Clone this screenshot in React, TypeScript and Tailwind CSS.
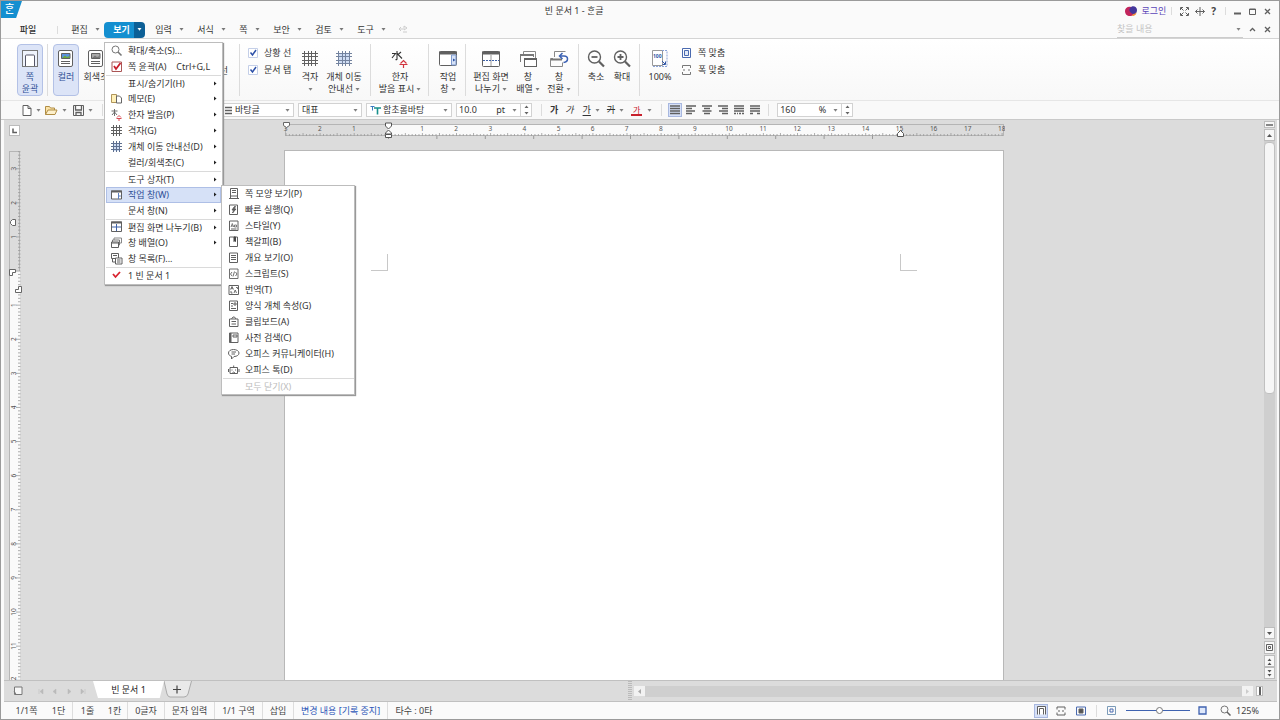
import React from "react";

type SvgProps = { w: number; h?: number; children: React.ReactNode; className?: string };

function Svg({ w, h = w, children, className = "" }: SvgProps) {
  return (
    <svg
      width={w}
      height={h}
      viewBox={`0 0 ${w} ${h}`}
      fill="none"
      stroke="#606060"
      strokeWidth="1"
      className={`shrink-0 ${className}`}
      aria-hidden="true"
    >
      {children}
    </svg>
  );
}

const Caret = ({ color = "#808080" }: { color?: string }) => (
  <Svg w={5} h={3}>
    <path d="M0.5 0h4L2.500 2.800z" fill={color} stroke="none" />
  </Svg>
);

const Divider = ({ className = "h-4" }: { className?: string }) => (
  <span className={`w-px shrink-0 bg-[#dcdcdc] ${className}`} />
);

/* ---------- title and menu bars ---------- */

function TitleBar() {
  return (
    <header className="flex h-5 shrink-0 items-center">
      <div className="flex w-28 shrink-0 self-start">
        <div className="h-[17px] w-[21px] bg-[#148fd0] text-center [clip-path:polygon(0_0,100%_0,72%_100%,0_100%)]">
          <span className="block pr-1 text-[11px] leading-4 font-medium text-white">ᄒᆞᆫ</span>
        </div>
      </div>
      <h1 className="flex-1 pr-[90px] text-center text-[9px] text-[#333]">빈 문서 1 - ᄒᆞᆫ글</h1>
      <div className="flex shrink-0 items-center pr-1">
        <button className="flex items-center gap-1 text-[9px] text-[#5a45b8]">
          <Svg w={12} h={10}>
            <path d="M6 1C3 0 0 2 0 5s2 5 5 5c3 0 4-2 4-5S8 1 6 1z" fill="#c2255c" stroke="none" />
            <path d="M5 2c2-3 7-2 7 2 0 3-2 5-4 4S3 5 5 2z" fill="#43369b" stroke="none" />
            <path d="M8 8c2 0 3-1 3-2 1 2-1 4-4 4z" fill="#f08c3a" stroke="none" />
          </Svg>
          로그인
        </button>
        <Divider className="mr-2 ml-[5px] h-2" />
        <button aria-label="전체 화면" className="mr-[6px]">
          <Svg w={9}>
            <path d="M0.5 3V0.5H3M6 0.5h2.5V3M8.5 6v2.5H6M3 8.5H0.5V6M1 1l2.5 2.5M8 1L5.500 3.500M8 8L5.500 5.500M1 8l2.500-2.500" />
          </Svg>
        </button>
        <button aria-label="창 맞춤" className="mr-[6px]">
          <Svg w={10} h={9}>
            <path d="M5 0v9M0.500 4.500h9M2.500 2.500l-2 2 2 2M7.500 2.500l2 2-2 2" />
          </Svg>
        </button>
        <button className="text-[10px] font-bold text-[#444]">?</button>
        <Divider className="mr-2 ml-[9px] h-2" />
        <button aria-label="최소화" className="mr-2">
          <Svg w={7}><path d="M0 5.500h7" strokeWidth="2" /></Svg>
        </button>
        <button aria-label="최대화" className="mr-2">
          <Svg w={7}><path d="M0.500 1h6v5.500h-6zM0 1.500h7" /></Svg>
        </button>
        <button aria-label="닫기" className="mr-1">
          <Svg w={7}><path d="M1 1l5 5M6 1L1 6" strokeWidth="1.300" /></Svg>
        </button>
      </div>
    </header>
  );
}

type Item = {
  label: string;
  icon?: React.ReactNode;
  shortcut?: string;
  arrow?: boolean;
  sep?: boolean;
  active?: boolean;
  disabled?: boolean;
};

const subItems: Item[] = [
  { label: "쪽 모양 보기(P)", icon: <path d="M2.500 0.500h7v7.500h-7zM4 2.500h4M4 4.500h4M1 10.500h10M2.500 8v2.500M9.500 8v2.500" /> },
  { label: "빠른 실행(Q)", icon: <><path d="M1.500 1h8v9.500h-8z" /><path d="M6.500 2.500L4 6h2l-1.500 3L8 5H6l1.500-2.500z" fill="#555" /></> },
  { label: "스타일(Y)", icon: <><path d="M1.500 1h8.500v9.500H1.500zM3 9h5.500" /><path d="M3 7l1.300-3.500L5.600 7M3.500 6h1.700M8.500 7V5H6.500v2z" strokeWidth="0.800" /></> },
  { label: "책갈피(B)", icon: <><path d="M1.500 1h8v9.500h-8z" /><path d="M6 1h1.500v4.500l-.75-.75-.75.750z" fill="#444" stroke="#444" /></> },
  { label: "개요 보기(O)", icon: <path d="M1.500 1h8v9.500h-8zM3 3.500h5M3 5.500h5M3 7.500h5" /> },
  { label: "스크립트(S)", icon: <path d="M1.500 1h8.500v9.500H1.500zM4 4L2.500 6 4 8M7.500 4L9 6 7.500 8M6.500 3.500l-1.500 5" strokeWidth="0.900" /> },
  { label: "번역(T)", icon: <><path d="M1 1.500h9.500v9H1z" /><path d="M2.500 5.500L4 2.500l1.500 3M3 4.700h2M6 9l1.200-3L8.500 9M3 7v2h1.500M8 3.500h1.500V5" strokeWidth="0.900" /></> },
  { label: "양식 개체 속성(G)", icon: <path d="M1.500 1h8v9.500h-8zM3 3.500h2M6 3h2v2H6zM3 6h2M3 8.500h5" /> },
  { label: "클립보드(A)", icon: <path d="M1.500 3h8.500v7.500H1.500zM3.500 3L5 1h1.500L8 3M3.500 5.500h4.500M3.500 8h4.500" /> },
  { label: "사전 검색(C)", icon: <><path d="M1.500 1h8.500v9.500H1.500zM5 3h4v2H5z" /><path d="M2.500 1v9.500" strokeWidth="2" /></> },
  { label: "오피스 커뮤니케이터(H)", icon: <path d="M5.500 1.500c-3 0-5 1.500-5 3.500s1.500 3 3 3.300V11L6 8.500c3 0 5-1.500 5-3.500s-2.500-3.500-5.500-3.500zM3.500 4h4.500M3.500 6H7" /> },
  { label: "오피스 톡(D)", icon: <><path d="M2 3.500h7.500v6H2zM0.500 5v3M11 5v3M5.700 1.500v2" /><path d="M4 5.500v1M7.500 5.500v1M4 9.500l1.700-1.500 1.800 1.500" /></> },
  { label: "모두 닫기(X)", sep: true, disabled: true },
];

const winIcon = (
  <>
    <path d="M0.500 2h10v8H0.500z" fill="#fff" />
    <path d="M0 2.500h11" strokeWidth="2" />
    <path d="M7.500 4v6" stroke="#5b7fc0" />
    <path d="M8.500 6l1.500 1-1.500 1z" fill="#355fb0" stroke="none" />
  </>
);

const viewItems: Item[] = [
  { label: "확대/축소(S)...", icon: <><circle cx="4.500" cy="4.500" r="3.500" stroke="#777" /><path d="M7 7l3.500 3.500" stroke="#777" strokeWidth="1.600" /></> },
  { label: "쪽 윤곽(A)", shortcut: "Ctrl+G,L", icon: <><path d="M1 1h9.500v9.500H1z" stroke="#a55" /><path d="M3 5l2 3 4.500-6" stroke="#c81e2b" strokeWidth="1.800" /></> },
  { label: "표시/숨기기(H)", arrow: true, sep: true },
  { label: "메모(E)", arrow: true, icon: <><path d="M0.500 1.500h5v8h-5z" fill="#fff0b8" stroke="#b0955a" /><path d="M5.500 3h3l2 2v5h-5z" fill="#fff" stroke="#666" /></> },
  { label: "한자 발음(P)", arrow: true, icon: <><path d="M3.500 0v7M0.500 2h6M3.500 3L1 6M3.500 3L6 6" strokeWidth="0.900" /><path d="M6 8.500L8 6.500l2 2M5.500 9.500h5M8 9.500V12" stroke="#d2353f" strokeWidth="0.900" /></> },
  { label: "격자(G)", arrow: true, icon: <path d="M0 2.500h11M0 5.500h11M0 8.500h11M2.500 0v11M5.500 0v11M8.500 0v11" /> },
  { label: "개체 이동 안내선(D)", arrow: true, icon: <><path d="M3 2h6v8H3z" fill="#cddcf3" stroke="none" /><path d="M0 2.500h11M0 5.500h11M0 8.500h11M2.500 0v11M5.500 0v11M8.500 0v11" stroke="#5f7090" /></> },
  { label: "컬러/회색조(C)", arrow: true },
  { label: "도구 상자(T)", arrow: true, sep: true },
  { label: "작업 창(W)", arrow: true, active: true, icon: winIcon },
  { label: "문서 창(N)", arrow: true },
  { label: "편집 화면 나누기(B)", arrow: true, sep: true, icon: <><path d="M0.500 1h10v9.500H0.500z" /><path d="M0 1.500h11" strokeWidth="2" /><path d="M5.500 3v7M1 6h9" stroke="#3f62a8" /></> },
  { label: "창 배열(O)", arrow: true, icon: <><path d="M3 3V1h7.500v5H9" stroke="#888" /><path d="M1.500 5V3H8.500v5H8" stroke="#777" /><path d="M0.500 5h7v5.500h-7zM0.500 6h7" fill="#fff" /></> },
  { label: "창 목록(F)...", icon: <><path d="M0.500 0.500h7v5h-7zM2 2.500h4M1.500 6v3H4" /><path d="M4.500 5h6.500v6H4.500zM6 7h3.500M6 9h3.500" fill="#fff" /></> },
  { label: "1 빈 문서 1", sep: true, icon: <path d="M2 5l2.500 3L9 3" stroke="#d8232f" strokeWidth="1.800" /> },
];

function MenuList({ items, pad, submenu }: { items: Item[]; pad: string; submenu?: React.ReactNode }) {
  return (
    <ul className={`border border-[#bdbdbd] bg-white shadow-[1px_1px_1px_#999] ${pad}`}>
      {items.map((it) => (
        <li key={it.label} className={`relative h-4 ${it.sep ? "border-t border-[#dadada]" : ""}`}>
          <button
            disabled={it.disabled}
            className={`flex h-full w-full items-center pr-1 pl-1 text-left text-[9px] leading-none whitespace-nowrap ${
              it.active ? "bg-[#d6e1f7] text-[#2f4f96] outline outline-[#aebfe6] -outline-offset-1" : it.disabled ? "text-[#bbb]" : "text-[#333]"
            }`}
          >
            <span className="flex w-[18px] shrink-0 pl-px">{it.icon && <Svg w={12}>{it.icon}</Svg>}</span>
            <span className="flex-1">
              {it.label}
              {it.shortcut && <span className="pl-[10px]">{it.shortcut}</span>}
            </span>
            {it.arrow && (
              <Svg w={3} h={5}>
                <path d="M0 0.500v4L2.500 2.500z" fill="#222" stroke="none" />
              </Svg>
            )}
          </button>
          {it.active && submenu}
        </li>
      ))}
    </ul>
  );
}

function ViewMenu() {
  return (
    <div className="absolute top-full left-0 z-20 w-[119px] pt-[4px]">
      <MenuList
        items={viewItems}
        pad="px-[1px] pb-px"
        submenu={
          <div className="absolute -top-[2px] left-full z-30 w-[134px]">
            <MenuList items={subItems} pad="pl-[1px]" />
          </div>
        }
      />
    </div>
  );
}

const menus = ["편집", "보기", "입력", "서식", "쪽", "보안", "검토", "도구"];

function MenuBar() {
  return (
    <nav className="flex h-[18px] shrink-0 items-center border-b border-[#d4d4d4] pl-[18px] text-[9px]">
      <button className="w-[18px] font-medium whitespace-nowrap">파일</button>
      <Divider className="ml-5 h-2" />
      <div className="flex flex-1 items-center pl-1">
        {menus.map((m) => {
          const on = m === "보기";
          return (
            <div key={m} className="relative mr-[1px] flex h-4 items-center">
              <button
                className={`h-4 pl-[5px] whitespace-nowrap ${m === "쪽" ? "w-[22px]" : "w-[30px]"} ${
                  on ? "rounded-l-sm bg-[#148fd0] font-bold text-white" : ""
                }`}
              >
                {m}
              </button>
              <button
                aria-label={`${m} 메뉴`}
                className={`flex h-4 w-[11px] items-center justify-center ${on ? "rounded-r-sm bg-[#0c5f96]" : ""}`}
              >
                <Caret color={on ? "#fff" : "#777"} />
              </button>
              {on && <ViewMenu />}
            </div>
          );
        })}
        <Svg w={10} h={9} className="ml-2">
          <path d="M1 4h4M3 2l-2 2 2 2M6 1l3 2-3 2zM5 7h4" stroke="#ccc" />
        </Svg>
      </div>
      <label className="flex w-[126px] items-center border-b border-[#ccc] pr-[2px]">
        <input aria-label="찾을 내용" placeholder="찾을 내용" className="w-0 flex-1 leading-4 outline-none placeholder:text-[#c4c4c4]" />
        <Caret />
      </label>
      <div className="flex items-center gap-2 pr-2 pl-[6px]">
        <button aria-label="접기"><Svg w={7}><path d="M1 5l2.500-2.500L6 5" strokeWidth="1.300" /></Svg></button>
        <button aria-label="문서 닫기"><Svg w={7}><path d="M1 1l5 5M6 1L1 6" strokeWidth="1.300" /></Svg></button>
      </div>
    </nav>
  );
}

/* ---------- ribbon ---------- */

function Big({ icon, lines, w, on, caret, below }: { icon: React.ReactNode; lines: string[]; w: string; on?: boolean; caret?: boolean; below?: boolean }) {
  return (
    <button
      className={`flex h-[52px] shrink-0 flex-col items-center rounded-sm border pt-[4px] text-[9px] leading-3 whitespace-nowrap ${w} ${
        on ? "border-[#b3c1e6] bg-[#dce4f7] text-[#2f4f96]" : "border-transparent text-[#333]"
      }`}
    >
      <Svg w={20} className="mb-[2px]">{icon}</Svg>
      {lines.map((l, i) => (
        <span key={l} className="flex items-center gap-[2px]">
          {l}
          {caret && i === lines.length - 1 && <Caret />}
        </span>
      ))}
      {below && <span className="flex h-3 items-center"><Caret /></span>}
    </button>
  );
}

const Tick = ({ label }: { label: string }) => (
  <label className="flex h-[17px] items-center gap-[6px] whitespace-nowrap">
    <input type="checkbox" defaultChecked className="peer sr-only" />
    <Svg w={10}>
      <path d="M0.500 0.500h9v9h-9z" fill="#fff" stroke="#c4cfe8" />
      <path d="M2.500 4.500l2 2.500 3.500-5" stroke="#2c50a8" strokeWidth="1.500" />
    </Svg>
    {label}
  </label>
);

const picture = (sky: string, land: string) => (
  <>
    <rect x="2.500" y="1.500" width="14" height="16" rx="1.500" fill="#fff" />
    <path d="M5.500 4.500h8.500v5H5.500z" fill={sky} />
    <path d="M6 9l3-2.500 2 1.500 2.500-1v2z" fill={land} stroke="none" />
    <path d="M5 12.500h9M5 14.500h9" />
  </>
);

const gridLines = "M4.500 2v15M8.500 2v15M11.500 2v15M15.500 2v15M2 4.500h16M2 7.500h16M2 11.500h16M2 14.500h16";

const RSep = ({ className = "" }: { className?: string }) => <Divider className={`h-[52px] ${className}`} />;

function Ribbon() {
  return (
    <section className="flex h-[62px] shrink-0 items-start overflow-hidden border-b border-[#e6e6e6] bg-linear-to-b from-white to-[#f8f8f8] pt-[5px] pl-4 text-[9px]">
      <Big w="w-[26px]" on lines={["쪽", "윤곽"]} icon={<><rect x="2.500" y="1.500" width="15" height="16" stroke="#777" fill="#eef2fb" /><path d="M5.500 17V7q0-1 1-1h7q1 0 1 1v10" fill="#fff" stroke="#556" /></>} />
      <RSep className="mr-[5px] ml-[4px]" />
      <Big w="w-[26px]" on lines={["컬러"]} icon={picture("#5b93dd", "#6faa3e")} />
      <Big w="w-[34px]" lines={["회색조"]} icon={picture("#aaa", "#777")} />
      <div className="flex w-[115px] shrink-0 flex-col items-end overflow-hidden pt-[1px]">
        <span className="h-[17px]" />
        <span className="h-[17px] leading-[17px]">선</span>
      </div>
      <RSep className="mr-[8px] ml-[11px]" />
      <div className="flex w-[47px] shrink-0 flex-col">
        <Tick label="상황 선" />
        <Tick label="문서 탭" />
      </div>
      <Big w="w-[30px]" lines={["격자"]} below icon={<path d={gridLines} />} />
      <Big w="w-[38px]" lines={["개체 이동", "안내선"]} caret icon={<><path d="M5 5h10v10H5z" fill="#cfddf4" stroke="none" /><path d={gridLines} stroke="#73839f" /></>} />
      <RSep className="mr-[7px] ml-[7px]" />
      <Big w="w-[44px]" lines={["한자", "발음 표시"]} caret icon={<><path d="M7 2v8q0 1-1.500 0.500M2 4.500h3.500L2 9M11 3L8 5.500 12 9.500M7 4l1.500 2" stroke="#333" strokeWidth="1.100" /><path d="M10.500 14.500L13.500 11.500l3 3M9.500 15.500h8M13.500 15.500V19" stroke="#d2353f" strokeWidth="1.200" /></>} />
      <RSep className="mr-[6px] ml-[6px]" />
      <Big w="w-[26px]" lines={["작업", "창"]} caret icon={<><rect x="1.500" y="2.500" width="17" height="14" rx="1" fill="#fff" /><path d="M1 4h18" strokeWidth="3" /><path d="M13.500 6h4.500v10h-4.500z" fill="#d6e2f7" stroke="#7f9bd0" /><path d="M15 9.500l2.500 1.500-2.500 1.500z" fill="#2f55a5" stroke="none" /></>} />
      <RSep className="mr-[5px] ml-[4px]" />
      <Big w="w-[40px]" lines={["편집 화면", "나누기"]} caret icon={<><rect x="1.500" y="2.500" width="17" height="15" rx="1" fill="#fff" /><path d="M1 4h18" strokeWidth="3" /><path d="M10 6v11" stroke="#999" /><path d="M2 11.500h16" stroke="#3f62a8" strokeDasharray="2 1" /></>} />
      <Big w="w-[34px]" lines={["창", "배열"]} caret icon={<><path d="M5.500 5V2.500h12v8H16" stroke="#888" /><path d="M2.500 13V5.500h13V8" stroke="#777" /><path d="M2 6h14" strokeWidth="2" stroke="#777" /><rect x="6.500" y="9.500" width="12" height="8" fill="#fff" /><path d="M6 10h13" strokeWidth="2" /></>} />
      <Big w="w-[28px]" lines={["창", "전환"]} caret icon={<><path d="M5.500 8V2.500h11M4 9.500H1.500v8h12v-4" stroke="#888" /><path d="M2 10.500h11" strokeWidth="2" stroke="#777" /><path d="M11 7h4q3.500 0 3.500 3t-4 3.500M13.500 4L10.500 7l3 3" stroke="#3c62b4" strokeWidth="1.500" /></>} />
      <RSep className="mr-[4px] ml-[5px]" />
      <Big w="w-[26px]" lines={["축소"]} icon={<><circle cx="8.500" cy="8" r="6" strokeWidth="1.400" /><path d="M13 12.500l5 5" strokeWidth="2.200" /><path d="M5.500 8h6" strokeWidth="1.800" /></>} />
      <Big w="w-[26px]" lines={["확대"]} icon={<><circle cx="8.500" cy="8" r="6" strokeWidth="1.400" /><path d="M13 12.500l5 5" strokeWidth="2.200" /><path d="M5.500 8h6M8.500 5v6" strokeWidth="1.800" /></>} />
      <RSep className="mr-[6px] ml-[4px]" />
      <Big
        w="w-[28px]"
        lines={["100%"]}
        icon={
          <>
            <path d="M2.500 1.500h10v15h-10z" fill="#fff" stroke="#999" />
            <path d="M12 1.500h5v16H3" stroke="#8aa3d8" strokeDasharray="2 1" />
            <text x="3" y="9" fontSize="5" fontWeight="700" fill="#2f55a5" stroke="none">100</text>
            <path d="M12 12l3 3M15.500 12.500v3h-3" stroke="#2f55a5" />
          </>
        }
      />
      <div className="flex flex-col pl-[8px]">
        <button className="flex h-[17px] items-center gap-[6px]">
          <Svg w={10}><path d="M0.500 0.500h8v9h-8z" stroke="#4b6bb0" /><path d="M2.500 2.500h4v5H2.500z" stroke="#4b6bb0" fill="#e3ebfa" /></Svg>
          쪽 맞춤
        </button>
        <button className="flex h-[17px] items-center gap-[6px]">
          <Svg w={10}><path d="M0.500 3V0.500h8V3M0.500 7v2.500h8V7M1 5h2M6 5h2" stroke="#777" /></Svg>
          폭 맞춤
        </button>
      </div>
    </section>
  );
}

/* ---------- formatting toolbar ---------- */

function Combo({ label, value, w, icon }: { label: string; value: string; w: string; icon?: React.ReactNode }) {
  return (
    <label className={`flex h-[14px] shrink-0 items-center border border-[#d2d2d2] bg-white pr-[3px] pl-[3px] ${w}`}>
      {icon}
      <select aria-label={label} className="w-0 flex-1 appearance-none bg-transparent leading-3 outline-none">
        <option>{value}</option>
      </select>
      <Caret />
    </label>
  );
}

function NumberBox({ label, value, unit }: { label: string; value: string; unit: string }) {
  return (
    <div className="flex h-[14px] shrink-0 border border-[#d2d2d2] bg-white">
      <label className="flex w-[63px] items-center pr-[3px] pl-[2px]">
        <input aria-label={label} defaultValue={value} className="w-0 flex-1 leading-3 outline-none" />
        <span className="pr-[7px]">{unit}</span>
        <Caret />
      </label>
      <button aria-label={`${label} 조절`} className="flex w-[11px] items-center justify-center border-l border-[#d2d2d2]">
        <Svg w={5} h={10}>
          <path d="M0.500 3h4L2.500 0.500zM0.500 7h4L2.500 9.500z" fill="#666" stroke="none" />
        </Svg>
      </button>
    </div>
  );
}

const aligns = [
  { n: "양쪽 정렬", d: "M0 1h10M0 3.500h10M0 6h10M0 8.500h10" },
  { n: "왼쪽 정렬", d: "M0 1h10M0 3.500h6M0 6h9M0 8.500h6" },
  { n: "가운데 정렬", d: "M0 1h10M2 3.500h6M0.500 6h9M2 8.500h6" },
  { n: "오른쪽 정렬", d: "M0 1h10M4 3.500h6M1 6h9M4 8.500h6" },
  { n: "배분 정렬", d: "M0 1h10M0 3.500h10M0 6h10M0 8.500h2M3 8.500h1M5 8.500h2M8 8.500h2" },
  { n: "나눔 정렬", d: "M0 1h10M0 3.500h10M0 6h10M0 8.500h3M7 8.500h3" },
];

function Toolbar() {
  return (
    <section className="flex h-[19px] shrink-0 items-center border-b border-[#c9c9c9] bg-[#f9f9f9] pl-[21px] text-[9px] text-[#333]">
      <button aria-label="새 문서" className="mr-1 flex items-center gap-[4px]">
        <Svg w={10} h={11}><path d="M1 0.500h5l3 3v7H1zM6 0.500v3h3" fill="#fff" /></Svg>
        <Caret />
      </button>
      <button aria-label="불러오기" className="mr-[6px] flex items-center gap-[4px]">
        <Svg w={13} h={11}><path d="M0.500 9.500v-8h4l1 1.500h4V5" fill="#fbe3a8" stroke="#b08d45" /><path d="M0.500 9.500L3 5h9L10 9.500z" fill="#fdf0cc" stroke="#b08d45" /></Svg>
        <Caret />
      </button>
      <button aria-label="저장하기" className="flex items-center gap-[4px]">
        <Svg w={11}><path d="M0.500 0.500h10v10h-10z" /><path d="M2 5h7M2.500 1v3.500M8.500 1v3.500M3 10V7.500h5V10" strokeWidth="1.300" /></Svg>
        <Caret />
      </button>
      <Divider className="mr-[117px] ml-[9px] h-3" />
      <div className="flex gap-1">
        <Combo label="스타일" value="바탕글" w="w-[74px]" icon={<Svg w={9} className="mr-[2px]"><path d="M1 1.500h7M1 4.500h7M1 7.500h7" strokeWidth="1.500" /></Svg>} />
        <Combo label="언어" value="대표" w="w-[64px]" />
        <Combo
          label="글꼴"
          value="함초롬바탕"
          w="w-[86px]"
          icon={<Svg w={12} h={10} className="mr-px"><path d="M4 3h7M7.500 3V9.500" stroke="#17908c" strokeWidth="1.600" /><path d="M0.500 1.500h4M2.500 1.500v4" stroke="#3a7ac0" /></Svg>}
        />
        <NumberBox label="글자 크기" value="10.0" unit="pt" />
      </div>
      <Divider className="mr-2 ml-[9px] h-3" />
      <button className="mr-[7px] font-bold">가</button>
      <button className="mr-[9px] italic">가</button>
      <button className="flex items-center gap-[4px]"><span className="underline underline-offset-2">가</span><Caret /></button>
      <button className="ml-[7px] flex items-center gap-[4px]"><span className="line-through">가</span><Caret /></button>
      <button className="ml-[7px] flex items-center gap-[5px]">
        <span className="flex w-[11px] flex-col items-center text-[8px] leading-[9px] text-[#c8202c]">
          가
          <span className="h-[2px] w-full bg-[#c8202c]" />
        </span>
        <Caret />
      </button>
      <Divider className="mr-[6px] ml-[9px] h-3" />
      <div className="flex gap-[2px]">
        {aligns.map((a, i) => (
          <button
            key={a.n}
            aria-label={a.n}
            className={`flex h-[14px] w-[14px] items-center justify-center border ${i === 0 ? "border-[#a8b8e0] bg-[#d6e0f7]" : "border-transparent"}`}
          >
            <Svg w={10}><path d={a.d} strokeWidth="1.500" /></Svg>
          </button>
        ))}
      </div>
      <Divider className="mr-[8px] ml-[6px] h-3" />
      <NumberBox label="줄 간격" value="160" unit="%" />
    </section>
  );
}

/* ---------- rulers and work area ---------- */

const CM = 34.1;

function HRuler() {
  const ticks = Array.from({ length: 211 }, (_, i) => i);
  return (
    <svg width="722" height="18" viewBox="0 0 722 18" className="mx-auto block" aria-hidden="true">
      <rect x="2.500" y="2.500" width="718" height="11" fill="#dcdcdc" stroke="#b5b5b5" />
      <rect x="105" y="3" width="512" height="10" fill="#fafafa" />
      {ticks.map((i) => (
        <path key={i} d={`M${3 + i * 3.41} ${i % 5 ? 12 : 11}V14`} stroke="#999" strokeWidth="0.800" />
      ))}
      {Array.from({ length: 22 }, (_, i) => i - 3).map((n) =>
        n === 0 ? null : (
          <text key={n} x={105 + n * CM} y="9" fontSize="6.500" textAnchor="middle" fill="#555">
            {Math.abs(n)}
          </text>
        ),
      )}
      {Array.from({ length: 11 }, (_, i) => (
        <path key={i} d={`M${105.500 + i * 48.400} 14v3`} stroke="#999" />
      ))}
      <path d="M0.500 0.500h6v3L3.500 5.500l-3-2z" fill="#fff" stroke="#666" />
      <path d="M102.500 1h6v3l-3 3-3-3zM105.500 8l3 3v1h-6v-1zM102.500 12.500h6v3h-6z" fill="#fff" stroke="#555" />
      <path d="M617.500 8.500l3 3v3h-6v-3z" fill="#fff" stroke="#555" />
    </svg>
  );
}

function VRuler() {
  return (
    <div className="flex w-[19px] shrink-0 flex-col items-start overflow-hidden pt-[5px] pl-[5px]">
      <button aria-label="탭 종류" className="mb-[15px] border border-[#bbb] bg-white">
        <Svg w={9}><path d="M3 2.500v4h4" strokeWidth="1.500" /></Svg>
      </button>
      <svg width="15" height="531" viewBox="0 0 15 531" className="block shrink-0" aria-hidden="true">
        <rect x="0.500" y="0.500" width="10" height="540" fill="#dcdcdc" stroke="#b5b5b5" />
        <rect x="1" y="120" width="10" height="411" fill="#fafafa" />
        {Array.from({ length: 156 }, (_, i) => (
          <path key={i} d={`M${(i - 5) % 10 ? 9 : 7} ${0.700 + i * 3.410}H11.500`} stroke="#999" strokeWidth="0.800" />
        ))}
        {Array.from({ length: 16 }, (_, i) => i - 3).map((n) =>
          n === 0 ? null : (
            <text key={n} transform={`translate(6.500 ${120 + n * CM}) rotate(-90)`} fontSize="6.500" textAnchor="middle" fill="#555">
              {Math.abs(n)}
            </text>
          ),
        )}
        <path d="M6.500 68.500v6h-3L1.500 72.500v-2l2-2z" fill="#fff" stroke="#666" />
        <path d="M0.500 118.500h6v3h-3v3H0.500z" fill="#fff" stroke="#666" />
        <path d="M9.500 135.500h3v6H6.500v-3h3z" fill="#fff" stroke="#666" />
      </svg>
    </div>
  );
}

const sbtn = "flex w-[11px] shrink-0 items-center justify-center border border-[#bdbdbd] bg-[#f7f7f7]";

function VScroll() {
  return (
    <div className="mr-px flex w-[12px] shrink-0 flex-col pt-px pb-px">
      <button aria-label="화면 나누기" className={`${sbtn} h-[7px]`}><Svg w={7} h={2}><path d="M0 1h7" strokeWidth="1.500" /></Svg></button>
      <button aria-label="위로" className={`${sbtn} mt-px h-[12px]`}><Svg w={5} h={3}><path d="M0 3h5L2.500 0z" fill="#555" stroke="none" /></Svg></button>
      <div className="w-[11px] flex-1 bg-[#cfcfcf] pt-px">
        <div className="h-[52%] rounded-sm border border-[#c0c0c0] bg-[#f6f6f6]" />
      </div>
      <button aria-label="아래로" className={`${sbtn} h-[12px]`}><Svg w={5} h={3}><path d="M0 0h5L2.500 3z" fill="#555" stroke="none" /></Svg></button>
      <button aria-label="개체 선택" className={`${sbtn} mt-[2px] h-[13px]`}><Svg w={7}><path d="M0.500 0.500h6v6h-6zM2.500 2.500h2v2h-2z" /></Svg></button>
      <button aria-label="이전 쪽" className={`${sbtn} mt-px h-[12px]`}><Svg w={5} h={7}><path d="M0.500 3h4L2.500 0.500zM0.500 7h4L2.500 4.500z" fill="#555" stroke="none" /></Svg></button>
      <button aria-label="다음 쪽" className={`${sbtn} h-[12px]`}><Svg w={5} h={7}><path d="M0.500 0h4L2.500 2.500zM0.500 4h4L2.500 6.500z" fill="#555" stroke="none" /></Svg></button>
    </div>
  );
}

function WorkArea() {
  return (
    <main className="flex min-h-0 flex-1 bg-[#dcdcdc]">
      <VRuler />
      <div className="flex min-w-0 flex-1 flex-col overflow-hidden pt-[2px]">
        <HRuler />
        <div className="mx-auto mt-[10px] flex w-[720px] flex-1 items-start justify-between border border-b-0 border-[#b8b8b8] bg-white px-[86px] pt-[103px]">
          <span className="h-[17px] w-[17px] border-r border-b border-[#c8c8c8]" />
          <span className="h-[17px] w-[17px] border-b border-l border-[#c8c8c8]" />
        </div>
      </div>
      <VScroll />
    </main>
  );
}

/* ---------- bottom bars ---------- */

function TabBar() {
  return (
    <div className="flex h-[22px] shrink-0 items-start border-y border-[#c0c0c0] bg-[#dcdcdc] text-[9px]">
      <div className="flex h-full w-[89px] shrink-0 items-center pl-[9px]">
        <Svg w={10}><path d="M1.500 1h7.500v7.500H1.500zM1 5l2.500 4" fill="#f7f7f7" stroke="#777" /></Svg>
        <Divider className="mr-[6px] ml-[6px] h-3 bg-[#aaa]" />
        <button aria-label="문서 탭 이동" className="flex">
          <Svg w={52} h={7}>
            <path d="M3 1v5M7 1L4 3.500 7 6zM20 1l-3 2.500L20 6zM32 1l3 2.500L32 6zM45 1l3 2.500L45 6zM49 1v5" fill="#bbb" stroke="#bbb" strokeWidth="0.500" />
          </Svg>
        </button>
      </div>
      <button className="h-[17px] w-[71px] bg-white text-center text-[#222] [clip-path:polygon(0_0,100%_0,94%_100%,7%_100%)]">빈 문서 1</button>
      <button aria-label="새 탭" className="flex">
        <Svg w={28} h={17}>
          <path d="M0 0l3 13q1 3 3 3h14q3 0 4-3L27.500 0" fill="#e9e9e9" stroke="#aaa" />
          <path d="M9 8.500h8M13 4.500v8" stroke="#444" strokeWidth="1.200" />
        </Svg>
      </button>
      <div className="flex flex-1 items-center self-stretch pl-[436px]">
        <Svg w={4} h={20}><path d="M1 0v20M3 0v20" stroke="#999" strokeDasharray="1 1" /></Svg>
        <button aria-label="왼쪽으로" className="ml-[2px] flex h-[10px] w-[11px] items-center justify-center bg-[#f2f2f2]"><Svg w={3} h={5}><path d="M3 0v5L0 2.500z" fill="#aaa" stroke="none" /></Svg></button>
        <div className="h-[11px] flex-1 bg-[#cfcfcf]" />
        <button aria-label="오른쪽으로" className="flex h-[10px] w-[11px] items-center justify-center bg-[#f2f2f2]"><Svg w={3} h={5}><path d="M0 0v5L3 2.500z" fill="#ccc" stroke="none" /></Svg></button>
        <span className="mr-[14px] ml-[3px] flex h-[10px] w-[7px] justify-center border border-[#bbb] bg-white"><Svg w={2} h={8}><path d="M1 0v8" strokeWidth="2" /></Svg></span>
      </div>
    </div>
  );
}

const status = [
  { t: "1/1쪽", w: "w-[37px]" },
  { t: "1단", w: "w-[28px]", line: true },
  { t: "1줄", w: "w-[29px]" },
  { t: "1칸", w: "w-[26px]", line: true },
  { t: "0글자", w: "w-[37px]", line: true },
  { t: "문자 입력", w: "w-[50px]", line: true },
  { t: "1/1 구역", w: "w-[48px]", line: true },
  { t: "삽입", w: "w-[31px]", line: true },
  { t: "변경 내용 [기록 중지]", w: "w-[94px]", line: true, blue: true },
  { t: "타수 : 0타", w: "w-[52px]" },
];

function StatusBar() {
  return (
    <footer className="flex h-[17px] shrink-0 items-center bg-[#fafafa] pl-[7px] text-[9px] text-[#444]">
      {status.map((s) => (
        <span
          key={s.t}
          className={`flex h-full shrink-0 items-center justify-center whitespace-nowrap ${s.w} ${s.line ? "border-r border-[#ddd]" : ""} ${s.blue ? "text-[#2b55b8]" : ""}`}
        >
          {s.t}
        </span>
      ))}
      <div className="flex flex-1 items-center justify-end pr-5">
        <button aria-label="쪽 윤곽" className="flex h-[14px] w-[14px] items-center justify-center border border-[#a8b8e0] bg-[#d6e0f7]"><Svg w={9}><path d="M0.500 8.500v-8h8v8M2.500 8.500v-6h4v6" fill="#fff" /></Svg></button>
        <button aria-label="폭 맞춤" className="mr-[10px] ml-2"><Svg w={10}><path d="M1 3.500V1h8v2.500M1 6.500V9h8V6.500M2 5h2M6 5h2" /></Svg></button>
        <button aria-label="전체 화면"><Svg w={10}><path d="M0.500 1h9v8h-9z" stroke="#4b6bb0" /><path d="M3 3h4v4H3z" fill="#555" /></Svg></button>
        <Divider className="mr-[10px] ml-[10px] h-3" />
        <button aria-label="축소" className="mr-[10px]"><Svg w={9}><path d="M0.500 0.500h8v8h-8z" stroke="#7b9bb8" /><path d="M3 3h3v3H3z" stroke="#4b6bb0" /></Svg></button>
        <input
          type="range"
          aria-label="확대 비율"
          defaultValue={53}
          className="h-2 w-16 appearance-none bg-transparent [&::-webkit-slider-runnable-track]:h-[1px] [&::-webkit-slider-runnable-track]:bg-[#3f62b0] [&::-webkit-slider-thumb]:-mt-[3px] [&::-webkit-slider-thumb]:h-[7px] [&::-webkit-slider-thumb]:w-[7px] [&::-webkit-slider-thumb]:appearance-none [&::-webkit-slider-thumb]:rounded-full [&::-webkit-slider-thumb]:border [&::-webkit-slider-thumb]:border-[#777] [&::-webkit-slider-thumb]:bg-white"
        />
        <button aria-label="확대" className="mr-[13px] ml-2"><Svg w={9}><path d="M1 1h7v7H1z" fill="#dfe8fa" stroke="#3f62b0" strokeWidth="1.300" /></Svg></button>
        <button className="flex items-center gap-[5px]">
          <Svg w={11}><circle cx="4.500" cy="4.500" r="3.500" stroke="#777" /><path d="M7 7l3.500 3.500" strokeWidth="1.500" /></Svg>
          125%
        </button>
      </div>
    </footer>
  );
}

export default function App() {
  return (
    <div className="flex h-screen flex-col overflow-hidden border border-[#9a9a9a] bg-[#fafafa] font-['Noto_Sans','Noto_Sans_CJK_KR',sans-serif] text-[#333]">
      <TitleBar />
      <MenuBar />
      <Ribbon />
      <Toolbar />
      <div className="flex min-h-0 flex-1 flex-col pr-[2px] pl-[3px]">
        <WorkArea />
        <TabBar />
      </div>
      <StatusBar />
    </div>
  );
}
